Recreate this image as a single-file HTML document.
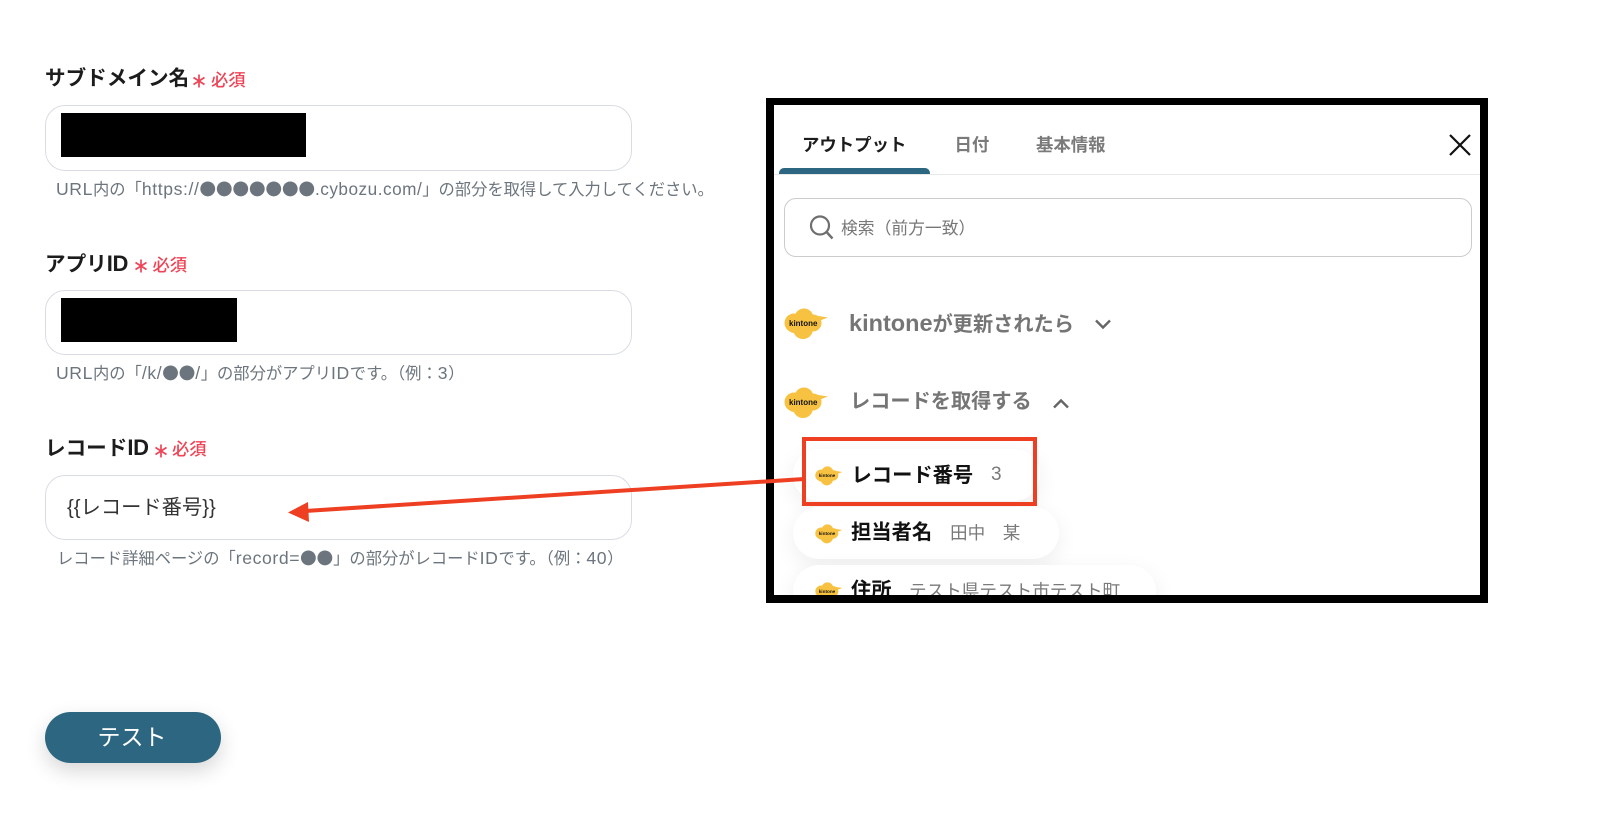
<!DOCTYPE html>
<html lang="ja"><head><meta charset="utf-8"><title>kintone</title>
<style>
html,body{margin:0;padding:0;background:#fff}
body{width:1600px;height:819px;position:relative;overflow:hidden;font-family:"Liberation Sans","Noto Sans CJK JP",sans-serif}
.a{position:absolute;white-space:nowrap}
.t{position:absolute;white-space:nowrap;line-height:30px;height:30px}
.lab{font-size:20.6px;font-weight:700;color:#1c1c1c;left:45px}
.lab span{font-size:22px;letter-spacing:-.4px}
.req{font-size:17.3px;font-weight:500;color:#ef4456}
.hint{font-size:16.3px;color:#6c757d}
.hint i{font-style:normal;font-size:17.6px;letter-spacing:.6px}
.hint i.s{font-size:17.2px;letter-spacing:.5px}
.hint b{font-weight:400;font-family:"Noto Sans CJK JP",sans-serif;font-size:16.5px}
.inp{position:absolute;left:45px;width:585px;border:1px solid #d9dde3;border-radius:20px;background:#fff;box-sizing:content-box}
.blk{position:absolute;left:61px;background:#000}
.pill{position:absolute;left:793px;background:#fff;border-radius:27px;box-shadow:0 6px 22px rgba(0,0,0,.07)}
.b{font-size:20.3px;font-weight:700;color:#111}
.g{font-size:17.6px;color:#7a7a7a}
.h{font-size:20.2px;font-weight:700;color:#757575}
.h span{font-size:23.5px}
.tab{font-size:17.4px;font-weight:700;color:#7a7a7a}
</style></head><body>

<div class="t lab" style="top:64px">サブドメイン名</div>
<svg class="a" style="left:191px;top:73px" width="16" height="16" viewBox="0 0 16 16"><path d="M8 1.500V14.500M2.500 4.500L13.500 11.500M13.500 4.500L2.500 11.500" stroke="#ef4456" stroke-width="1.7" fill="none"/></svg>
<div class="t req" style="left:211px;top:65px">必須</div>
<div class="inp" style="top:105px;height:64px"></div>
<div class="blk" style="top:113px;width:245px;height:44px"></div>
<div class="t hint" style="left:56px;top:173px"><i>URL</i>内の「<i>https://</i><b>●●●●●●●</b><i class="s">.cybozu.com/</i>」の部分を取得して入力してください。</div>

<div class="t lab" style="top:249px">アプリ<span>ID</span></div>
<svg class="a" style="left:133px;top:258px" width="16" height="16" viewBox="0 0 16 16"><path d="M8 1.500V14.500M2.500 4.500L13.500 11.500M13.500 4.500L2.500 11.500" stroke="#ef4456" stroke-width="1.7" fill="none"/></svg>
<div class="t req" style="left:152.500px;top:250px">必須</div>
<div class="inp" style="top:290px;height:63px"></div>
<div class="blk" style="top:298px;width:176px;height:44px"></div>
<div class="t hint" style="left:56px;top:357px"><i>URL</i>内の「<i>/k/</i><b>●●</b><i>/</i>」の部分がアプリ<i>ID</i>です。（例：<i>3</i>）</div>

<div class="t lab" style="top:433px">レコード<span>ID</span></div>
<svg class="a" style="left:152.500px;top:443px" width="16" height="16" viewBox="0 0 16 16"><path d="M8 1.500V14.500M2.500 4.500L13.500 11.500M13.500 4.500L2.500 11.500" stroke="#ef4456" stroke-width="1.7" fill="none"/></svg>
<div class="t req" style="left:172px;top:434px">必須</div>
<div class="inp" style="top:475px;height:63px"></div>
<div class="t" style="left:67px;top:493px;font-size:20.300px;color:#333">{{レコード番号}}</div>
<div class="t hint" style="left:57px;top:542px">レコード詳細ページの「<i>record=</i><b>●●</b>」の部分がレコード<i>ID</i>です。（例：<i>40</i>）</div>

<div class="a" style="left:45px;top:712px;width:176px;height:51px;border-radius:26px;background:#2d6680;box-shadow:0 8px 20px rgba(0,0,0,.16);color:#fff;font-size:23px;line-height:50px;text-align:center;text-indent:-2px">テスト</div>

<div class="a" style="left:766px;top:97.500px;width:722px;height:505.500px;box-sizing:border-box;border:8px solid #000;border-top-width:7.500px;background:#fff;overflow:hidden">
  <div style="position:absolute;left:-766px;top:-97px;width:1600px;height:819px;margin:-8px 0 0 -8px">
    <div class="t tab" style="left:802px;top:130px;color:#1c1c1c">アウトプット</div>
    <div class="t tab" style="left:954.500px;top:130px">日付</div>
    <div class="t tab" style="left:1036px;top:130px">基本情報</div>
    <div class="a" style="left:779px;top:168px;width:151px;height:6px;background:#2d6680;border-radius:5px 5px 0 0"></div>
    <div class="a" style="left:773px;top:174px;width:708px;height:1px;background:#e8e8e8"></div>
    <svg class="a" style="left:1447px;top:132px" width="26" height="26" viewBox="0 0 26 26"><path d="M3 3L23 23M23 3L3 23" stroke="#111" stroke-width="2.200" fill="none"/></svg>
    <div class="a" style="left:784px;top:198px;width:686px;height:57px;border:1px solid #ccc;border-radius:12px"></div>
    <svg class="a" style="left:809px;top:215px" width="26" height="25" viewBox="0 0 26 25"><circle cx="11" cy="10.500" r="9" fill="none" stroke="#6f6f6f" stroke-width="2.200"/><path d="M17.500 17L23.500 23.500" stroke="#6f6f6f" stroke-width="2.400" fill="none"/></svg>
    <div class="t" style="left:841px;top:214px;font-size:16.800px;color:#777">検索（前方一致）</div>

    <svg class="a" style="left:784px;top:308px" width="45" height="32" viewBox="0 0 45 32"><g fill="#f7c241"><circle cx="10" cy="15" r="9.500"/><circle cx="20" cy="10" r="9.500"/><circle cx="29" cy="15" r="8.500"/><circle cx="19" cy="21" r="10"/><circle cx="10" cy="19" r="6"/><path d="M28 7L44 9.500L32 14Z"/></g><text x="5" y="18" font-size="8" font-weight="700" font-family="Liberation Sans" fill="#111">kintone</text></svg>
    <div class="t h" style="left:849px;top:308px"><span>kintone</span>が更新されたら</div>
    <svg class="a" style="left:1094px;top:318px" width="18" height="12" viewBox="0 0 18 12"><path d="M2 2.500L9 9.500L16 2.500" fill="none" stroke="#666" stroke-width="2.400"/></svg>

    <svg class="a" style="left:784px;top:387px" width="45" height="32" viewBox="0 0 45 32"><g fill="#f7c241"><circle cx="10" cy="15" r="9.500"/><circle cx="20" cy="10" r="9.500"/><circle cx="29" cy="15" r="8.500"/><circle cx="19" cy="21" r="10"/><circle cx="10" cy="19" r="6"/><path d="M28 7L44 9.500L32 14Z"/></g><text x="5" y="18" font-size="8" font-weight="700" font-family="Liberation Sans" fill="#111">kintone</text></svg>
    <div class="t h" style="left:850px;top:387px">レコードを取得する</div>
    <svg class="a" style="left:1052px;top:398px" width="18" height="12" viewBox="0 0 18 12"><path d="M2 9.500L9 2.500L16 9.500" fill="none" stroke="#666" stroke-width="2.400"/></svg>

    <div class="pill" style="top:449px;width:247px;height:52px"></div>
    <div class="pill" style="top:507px;width:266px;height:52px"></div>
    <div class="pill" style="top:565px;width:363px;height:52px"></div>

    <svg class="a" style="left:815px;top:466px" width="28" height="20" viewBox="0 0 45 32"><g fill="#f7c241"><circle cx="10" cy="15" r="9.500"/><circle cx="20" cy="10" r="9.500"/><circle cx="29" cy="15" r="8.500"/><circle cx="19" cy="21" r="10"/><circle cx="10" cy="19" r="6"/><path d="M28 7L44 9.500L32 14Z"/></g><text x="6" y="18" font-size="7.500" font-weight="700" font-family="Liberation Sans" fill="#111">kintone</text></svg>
    <div class="t b" style="left:851.500px;top:461px">レコード番号</div>
    <div class="t g" style="left:991px;top:460px;font-size:19px">3</div>

    <svg class="a" style="left:815px;top:524px" width="28" height="20" viewBox="0 0 45 32"><g fill="#f7c241"><circle cx="10" cy="15" r="9.500"/><circle cx="20" cy="10" r="9.500"/><circle cx="29" cy="15" r="8.500"/><circle cx="19" cy="21" r="10"/><circle cx="10" cy="19" r="6"/><path d="M28 7L44 9.500L32 14Z"/></g><text x="6" y="18" font-size="7.500" font-weight="700" font-family="Liberation Sans" fill="#111">kintone</text></svg>
    <div class="t b" style="left:851px;top:518px">担当者名</div>
    <div class="t g" style="left:950px;top:518px">田中　某</div>

    <svg class="a" style="left:815px;top:582px" width="28" height="20" viewBox="0 0 45 32"><g fill="#f7c241"><circle cx="10" cy="15" r="9.500"/><circle cx="20" cy="10" r="9.500"/><circle cx="29" cy="15" r="8.500"/><circle cx="19" cy="21" r="10"/><circle cx="10" cy="19" r="6"/><path d="M28 7L44 9.500L32 14Z"/></g><text x="6" y="18" font-size="7.500" font-weight="700" font-family="Liberation Sans" fill="#111">kintone</text></svg>
    <div class="t b" style="left:851px;top:576px">住所</div>
    <div class="t g" style="left:909px;top:576px">テスト県テスト市テスト町</div>
  </div>
</div>

<div class="a" style="left:802px;top:437px;width:235px;height:69px;box-sizing:border-box;border:4px solid #ee3f22"></div>
<svg class="a" style="left:0;top:0" width="1600" height="819" viewBox="0 0 1600 819"><path d="M804 479L305 511" stroke="#ee3f22" stroke-width="4" fill="none"/><path d="M288 512.500L308 502L309 522Z" fill="#ee3f22"/></svg>
</body></html>
